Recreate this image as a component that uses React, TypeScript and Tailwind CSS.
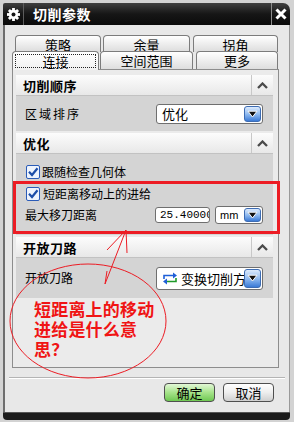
import type {ReactNode} from 'react';

const ArrowBtn = () => (
	<div className="w-[17px] shrink-0 rounded-[3px] border border-[#3d6cb3] bg-linear-to-b from-[#dceafc] via-[#92bcf0] to-[#3a7ad6] flex items-center justify-center">
		<svg width="11" height="8" viewBox="0 0 11 8">
			<path d="M1 1.2 H10 L5.5 7 Z" fill="#111" stroke="#fff" strokeWidth="1" />
		</svg>
	</div>
);

const Select = ({children, className}: {children: ReactNode; className: string}) => (
	<div className={`bg-white border border-[#6f6f6f] rounded-[3px] flex items-stretch p-px ${className}`}>
		<div className="flex-1 min-w-0 overflow-hidden whitespace-nowrap flex items-center">{children}</div>
		<ArrowBtn />
	</div>
);

const Chevron = () => (
	<svg width="11" height="7" viewBox="0 0 11 7">
		<polyline points="1,6 5.5,1.5 10,6" fill="none" stroke="#4a4a4a" strokeWidth="2.3" />
	</svg>
);

const Header = ({title}: {title: string}) => (
	<div className="h-[21px] flex border-b border-[#c2c2c2] bg-linear-to-b from-[#fcfcfc] to-[#e8e8e8]">
		<div className="flex-1 pl-[7px] flex items-center text-[13px] font-bold leading-none tracking-[0.5px]">
			{title}
		</div>
		<div className="w-[22px] border-l border-[#c8c8c8] flex items-center justify-center">
			<Chevron />
		</div>
	</div>
);

const CheckBox = () => (
	<svg width="14" height="14" viewBox="0 0 14 14">
		<rect x="0.5" y="0.5" width="13" height="13" rx="1.5" fill="#eef4fd" stroke="#2b5cb8" />
		<path d="M3 6.8 L6 10 L11.5 3.2" fill="none" stroke="#1d4ea8" strokeWidth="2.2" />
	</svg>
);

const Gear = () => (
	<svg width="13" height="13" viewBox="-6.5 -6.5 13 13">
		{[0, 45, 90, 135].map((a) => (
			<rect key={a} x="-1.4" y="-6.5" width="2.8" height="13" fill="#fff" transform={`rotate(${a})`} />
		))}
		<circle r="4.7" fill="#fff" />
		<circle r="2" fill="#151515" />
	</svg>
);

const SwapIcon = () => (
	<svg width="16" height="15" viewBox="0 0 16 15" className="shrink-0">
		<path d="M2 8 V4.5 H12" fill="none" stroke="#1f5fd8" strokeWidth="1.6" />
		<path d="M11 1.5 L15 4.5 L11 7.5 Z" fill="#1f5fd8" />
		<path d="M14 7 V10.5 H4" fill="none" stroke="#1f9a2a" strokeWidth="1.6" />
		<path d="M5 7.5 L1 10.5 L5 13.5 Z" fill="#1f5fd8" />
	</svg>
);

const BackTab = ({label, className}: {label: string; className: string}) => (
	<div
		className={`h-[17px] rounded-t-[4px] border border-b-0 border-[#7c7c7c] bg-linear-to-b from-white to-[#dcdcdc] flex items-center justify-center text-[13px] leading-none ${className}`}
	>
		{label}
	</div>
);

const App = () => {
	return (
		<div className="relative w-[294px] h-[422px] overflow-hidden bg-[#d3d3d3] pt-[3px] pl-[3px] font-['Noto_Sans_CJK_SC',sans-serif] text-black">
			<div className="w-[287px] h-[417px] flex flex-col">
				{/* title bar */}
				<div className="h-[22px] flex items-stretch bg-linear-to-b from-[#404040] via-[#161616] to-[#0b0b0b] rounded-tr-[7px] rounded-tl-[2px]">
					<div className="w-[21px] border-r border-[#5c5c5c] flex items-center justify-center">
						<Gear />
					</div>
					<div className="flex-1 pl-[9px] flex items-center text-white text-[14px] font-bold leading-none tracking-[0.5px]">
						切削参数
					</div>
					<div className="w-[19px] border-l border-[#8c8c8c] flex items-center justify-center">
						<svg width="12" height="12" viewBox="0 0 12 12">
							<path d="M1.5 1.5 L10.5 10.5 M10.5 1.5 L1.5 10.5" stroke="#fff" strokeWidth="3" />
						</svg>
					</div>
				</div>

				{/* body */}
				<div className="flex-1 bg-[#e8e8e8] border-l-2 border-l-[#6e6e6e] border-r border-r-[#999999] flex flex-col">
					{/* tabs */}
					<div className="mt-[10px] ml-[10px] flex">
						<BackTab label="策略" className="w-[86px]" />
						<BackTab label="余量" className="ml-[2px] w-[87px]" />
						<BackTab label="拐角" className="ml-[3px] w-[85px]" />
					</div>
					<div className="-mt-px ml-[7px] flex relative z-10">
						<div className="w-[87px] h-[19px] -mb-px rounded-t-[4px] border border-b-0 border-[#7c7c7c] bg-linear-to-b from-white to-[#f1f1f1] flex">
							<div className="flex-1 m-[2px] border border-dotted border-[#222] flex items-center justify-center text-[13px] leading-none">
								连接
							</div>
						</div>
						<div className="ml-px w-[93px] h-[18px] rounded-t-[4px] border border-b-0 border-[#7c7c7c] bg-linear-to-b from-white to-[#dedede] flex items-center justify-center text-[13px] leading-none">
							空间范围
						</div>
						<div className="ml-[3px] w-[82px] h-[18px] rounded-t-[4px] border border-b-0 border-[#7c7c7c] bg-linear-to-b from-white to-[#dedede] flex items-center justify-center text-[13px] leading-none">
							更多
						</div>
					</div>

					{/* panel */}
					<div className="ml-[7px] w-[267px] h-[299px] border border-[#8d8d8d] bg-[#ebebeb] pt-[5px] pl-[3px] pr-[5px] flex flex-col">
						<Header title="切削顺序" />
						<div className="h-[35px] bg-[#d4d4d4] pl-[9px] pr-[10px] flex items-center justify-between">
							<span className="text-[12px] leading-none tracking-[2px]">区域排序</span>
							<Select className="w-[107px] h-[20px]">
								<span className="pl-[4px] text-[13px] leading-none">优化</span>
							</Select>
						</div>

						<div className="mt-[2px]">
							<Header title="优化" />
						</div>
						<div className="h-[81px] bg-[#d4d4d4] pt-[11px] pl-[10px] pr-[10px] flex flex-col">
							<div className="h-[14px] flex items-center gap-[2px]">
								<CheckBox />
								<span className="text-[12px] leading-none">跟随检查几何体</span>
							</div>
							<div className="mt-[8px] h-[14px] flex items-center gap-[3px]">
								<CheckBox />
								<span className="text-[12px] leading-none">短距离移动上的进给</span>
							</div>
							<div className="mt-[5px] -ml-px h-[18px] flex items-center">
								<span className="flex-1 text-[12px] leading-none">最大移刀距离</span>
								<div className="w-[55px] h-[16px] bg-white border border-[#6f6f6f] rounded-[3px] overflow-hidden whitespace-nowrap pl-[4px] flex items-center font-['Liberation_Mono',monospace] text-[11px] leading-none">
									25.40000
								</div>
								<Select className="ml-[5px] w-[48px] h-[18px]">
									<span className="pl-[3px] font-['Liberation_Sans',sans-serif] text-[11px] leading-none">mm</span>
								</Select>
							</div>
						</div>

						<div className="mt-[2px]">
							<Header title="开放刀路" />
						</div>
						<div className="h-[40px] bg-[#d4d4d4] pl-[9px] pr-[10px] flex items-center justify-between">
							<span className="text-[12px] leading-none">开放刀路</span>
							<Select className="w-[107px] h-[23px]">
								<div className="pl-[4px] flex items-center gap-[3px]">
									<SwapIcon />
									<span className="text-[13px] leading-none">变换切削方向</span>
								</div>
							</Select>
						</div>
					</div>

					{/* separator */}
					<div className="mt-[9px] ml-[4px] w-[276px] h-[2px] border-t border-[#b4b4b4] border-b border-b-white" />

					{/* buttons */}
					<div className="mt-[4px] pr-[15px] flex justify-end gap-[8px]">
						<button className="w-[51px] h-[19px] rounded-[4px] border border-[#4f4f4f] bg-linear-to-b from-[#e2f7d6] via-[#a6e38a] to-[#6ec851] text-[13px] leading-none flex items-center justify-center">
							确定
						</button>
						<button className="w-[51px] h-[19px] rounded-[4px] border border-[#4f4f4f] bg-linear-to-b from-white via-[#eeeeee] to-[#cfcfcf] text-[13px] leading-none flex items-center justify-center">
							取消
						</button>
					</div>
				</div>

				{/* bottom bar */}
				<div className="h-[8px] bg-[#1b1b1b] border-t border-[#555555] rounded-b-[4px]" />
			</div>

			{/* red annotation drawn over the dialog */}
			<svg className="absolute inset-0 pointer-events-none" width="294" height="422" viewBox="0 0 294 422">
				<rect x="14.5" y="182.5" width="264" height="50" fill="none" stroke="#ec1c24" strokeWidth="3" />
				<g stroke="#ec1c24" strokeWidth="1" fill="none">
					<line x1="126" y1="230" x2="107" y2="250" />
					<line x1="126" y1="230" x2="127" y2="253" />
					<line x1="126" y1="230" x2="105" y2="284" />
					<line x1="105" y1="284" x2="107" y2="271" />
					<ellipse cx="88" cy="321" rx="78" ry="57" />
				</g>
			</svg>
			<div className="absolute left-[34px] top-[299px] text-[17px] leading-[20px] font-bold text-[#f01414] tracking-[0.2px]">
				<div>短距离上的移动</div>
				<div>进给是什么意</div>
				<div>思？</div>
			</div>
		</div>
	);
};

export default App;
